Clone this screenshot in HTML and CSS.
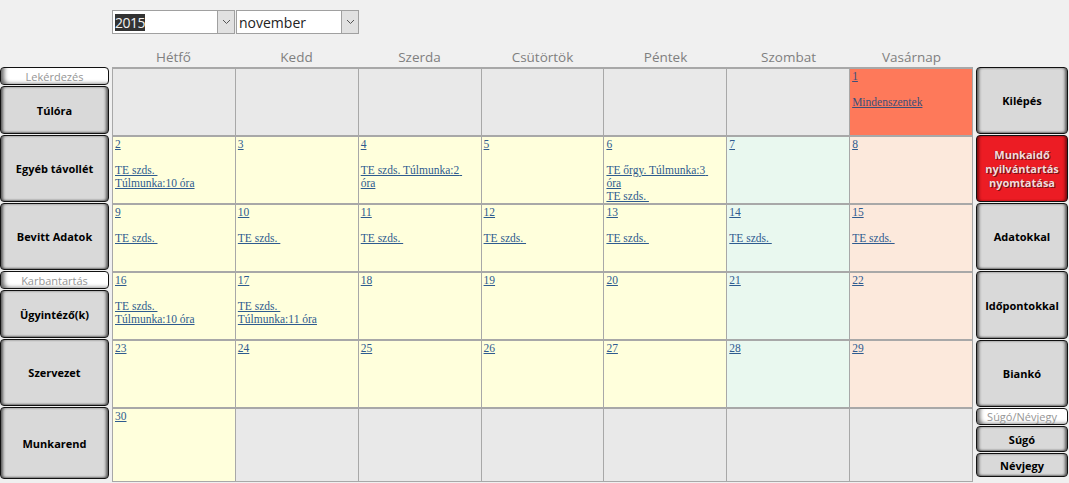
FILE: index.html
```html
<!DOCTYPE html>
<html lang="hu">
<head>
    <meta charset="UTF-8">
    <title>Munkaidő nyilvántartás</title>
    <link rel="stylesheet" href="styles.css">
</head>
<body>

<div class="top">
    <div class="combo year">
        <span class="value"><span class="sel">2015</span></span>
        <span class="arrow"><svg width="9" height="6" viewBox="0 0 9 6"><path d="M1 1 L4.5 4.5 L8 1" fill="none" stroke="#555" stroke-width="1"/></svg></span>
    </div>
    <div class="combo month">
        <span class="value">november</span>
        <span class="arrow"><svg width="9" height="6" viewBox="0 0 9 6"><path d="M1 1 L4.5 4.5 L8 1" fill="none" stroke="#555" stroke-width="1"/></svg></span>
    </div>
</div>

<div class="heads">
    <div>Hétfő</div><div>Kedd</div><div>Szerda</div><div>Csütörtök</div><div>Péntek</div><div>Szombat</div><div>Vasárnap</div>
</div>

<div class="main">
    <!-- bal oldali gombok -->
    <div class="side left">
        <div class="label h18">Lekérdezés</div>
        <div class="btn h48">Túlóra</div>
        <div class="btn h67">Egyéb távollét</div>
        <div class="btn h67">Bevitt Adatok</div>
        <div class="label h18">Karbantartás</div>
        <div class="btn h48">Ügyintéző(k)</div>
        <div class="btn h67">Szervezet</div>
        <div class="btn h71">Munkarend</div>
    </div>

    <!-- naptár -->
    <div class="cal">
        <div class="cell empty"></div>
        <div class="cell empty"></div>
        <div class="cell empty"></div>
        <div class="cell empty"></div>
        <div class="cell empty"></div>
        <div class="cell empty"></div>
        <div class="cell holiday"><a>1</a><br><br><a>Mindenszentek</a></div>

        <div class="cell"><a>2</a><br><br><a>TE szds. </a><br><a>Túlmunka:10 óra</a></div>
        <div class="cell"><a>3</a></div>
        <div class="cell"><a>4</a><br><br><a>TE szds. Túlmunka:2 óra</a></div>
        <div class="cell"><a>5</a></div>
        <div class="cell"><a>6</a><br><br><a>TE őrgy. Túlmunka:3 óra</a><br><a>TE szds. </a></div>
        <div class="cell sat"><a>7</a></div>
        <div class="cell sun"><a>8</a></div>

        <div class="cell"><a>9</a><br><br><a>TE szds. </a></div>
        <div class="cell"><a>10</a><br><br><a>TE szds. </a></div>
        <div class="cell"><a>11</a><br><br><a>TE szds. </a></div>
        <div class="cell"><a>12</a><br><br><a>TE szds. </a></div>
        <div class="cell"><a>13</a><br><br><a>TE szds. </a></div>
        <div class="cell sat"><a>14</a><br><br><a>TE szds. </a></div>
        <div class="cell sun"><a>15</a><br><br><a>TE szds. </a></div>

        <div class="cell"><a>16</a><br><br><a>TE szds. </a><br><a>Túlmunka:10 óra</a></div>
        <div class="cell"><a>17</a><br><br><a>TE szds. </a><br><a>Túlmunka:11 óra</a></div>
        <div class="cell"><a>18</a></div>
        <div class="cell"><a>19</a></div>
        <div class="cell"><a>20</a></div>
        <div class="cell sat"><a>21</a></div>
        <div class="cell sun"><a>22</a></div>

        <div class="cell"><a>23</a></div>
        <div class="cell"><a>24</a></div>
        <div class="cell"><a>25</a></div>
        <div class="cell"><a>26</a></div>
        <div class="cell"><a>27</a></div>
        <div class="cell sat"><a>28</a></div>
        <div class="cell sun"><a>29</a></div>

        <div class="cell"><a>30</a></div>
        <div class="cell empty"></div>
        <div class="cell empty"></div>
        <div class="cell empty"></div>
        <div class="cell empty"></div>
        <div class="cell empty"></div>
        <div class="cell empty"></div>
    </div>

    <!-- jobb oldali gombok -->
    <div class="side right">
        <div class="btn h67">Kilépés</div>
        <div class="btn red h67">Munkaidő nyilvántartás nyomtatása</div>
        <div class="btn h67">Adatokkal</div>
        <div class="btn h68">Időpontokkal</div>
        <div class="btn h67">Biankó</div>
        <div class="label h17">Súgó/Névjegy</div>
        <div class="btn h25">Súgó</div>
        <div class="btn h24">Névjegy</div>
    </div>
</div>

</body>
</html>
```

FILE: styles.css
```css
/* Alap */
body {
    margin: 0;
    background-color: #f0f0f0;
    font-family: "Open Sans", "Noto Sans", sans-serif;
    width: 1069px;
    height: 483px;
    overflow: hidden;
}

/* Év / hónap választó */
.top {
    display: flex;
    gap: 1px;
    padding: 10px 0 0 112px;
    height: 24px;
}

.combo {
    display: flex;
    width: 121px;
    height: 22px;
    border: 1px solid #a0a0a0;
    background-color: #fff;
    font-size: 14px;
    font-family: "Open Sans", sans-serif;
}

.combo .value {
    flex: 1;
    display: flex;
    align-items: center;
    padding-left: 2px;
    color: #222;
}

.combo .sel {
    background-color: #333;
    color: #f2f2f2;
    line-height: 17px;
    letter-spacing: -0.5px;
}

.combo .arrow {
    width: 16px;
    background-color: #e1e1e1;
    border-left: 1px solid #a0a0a0;
    display: flex;
    align-items: center;
    justify-content: center;
}

/* Napok fejléc */
.heads {
    display: flex;
    margin: 15px 0 0 112px;
    width: 861px;
    height: 18px;
}

.heads div {
    flex: 1;
    text-align: center;
    color: #7f7f7f;
    font-size: 13.5px;
    line-height: 16px;
}

/* Fő rész */
.main {
    display: flex;
}

.side {
    display: flex;
    flex-direction: column;
    gap: 1px;
}

.side.left {
    width: 109px;
    margin-right: 3px;
}

.side.right {
    width: 92px;
    margin-left: 3px;
}

.btn, .label {
    box-sizing: border-box;
    border: 1px solid #111;
    border-radius: 4px;
    display: flex;
    align-items: center;
    justify-content: center;
    text-align: center;
    font-size: 11px;
    font-weight: bold;
    color: #000;
}

.btn {
    background-color: #d9d9d9;
    box-shadow: inset 3px 0 3px -1px #5a5a5a, inset -3px 0 3px -1px #5a5a5a, inset 0 -2px 2px -1px #888;
}

.label {
    background-color: #fff;
    color: #959595;
    font-weight: normal;
    box-shadow: inset 5px -2px 4px -2px #666;
}

.btn.red {
    background-color: #ec1c24;
    color: #f4dcdc;
    line-height: 14px;
    padding: 0 4px;
    text-shadow: 1px 1px 0 #7a1014, -1px 0 0 #b01a1f;
    box-shadow: inset 3px 0 3px -1px #7a0c10, inset -3px 0 3px -1px #7a0c10;
}

.h17 { height: 17px; }
.h18 { height: 18px; }
.h24 { height: 24px; }
.h25 { height: 26px; }
.h48 { height: 48px; }
.h67 { height: 67px; }
.h68 { height: 68px; }
.h71 { height: 72px; }

/* Naptár */
.cal {
    width: 861px;
    height: 415px;
    box-sizing: border-box;
    display: grid;
    grid-template-columns: repeat(7, 1fr);
    grid-template-rows: repeat(5, 66px) 1fr;
    gap: 2px 1px;
    padding: 2px 1px 1px;
    background-color: #a8a8a8;
}

.cell {
    background-color: #ffffdc;
    padding: 1px 8px 1px 2px;
    font-family: "Liberation Serif", "Times New Roman", serif;
    font-size: 11.5px;
    line-height: 13px;
    overflow: hidden;
}

.cell a {
    color: #2e5b8f;
    text-decoration: underline;
    white-space: pre-wrap;
}

.cell.empty { background-color: #e9e9e9; }
.cell.sat { background-color: #e9f8ef; }
.cell.sun { background-color: #fce9dc; }
.cell.holiday { background-color: #fe795a; }
.cell.holiday a { color: #3c4f7a; }
```
